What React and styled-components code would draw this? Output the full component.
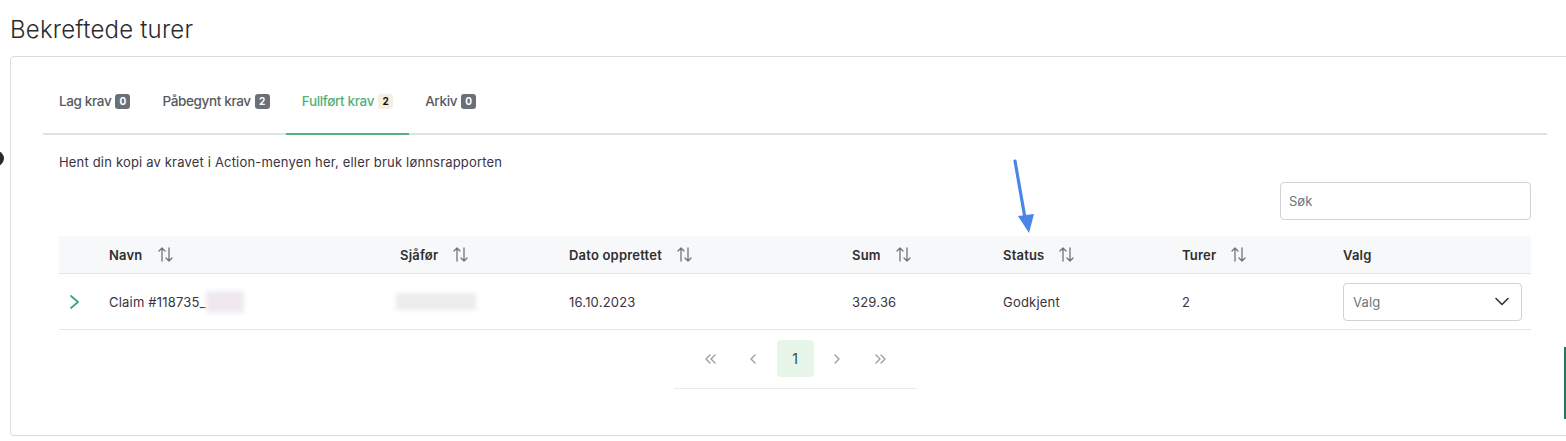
import React from 'react'
import styled, { createGlobalStyle } from 'styled-components'

const GlobalStyle = createGlobalStyle`
    html, body {
        margin: 0;
        padding: 0;
        background: #ffffff;
        overflow: hidden;
    }
    body {
        font-family: Inter, "Noto Sans", "Liberation Sans", sans-serif;
        color: #333333;
        width: 1566px;
        height: 441px;
    }
    * { box-sizing: border-box; }
`

const Page = styled.div`
    position: relative;
    padding: 14px 0 0 10px;
    height: 441px;
`

const Title = styled.h1`
    margin: 0 0 10px;
    font-size: 24px;
    line-height: 32px;
    font-weight: 300;
    color: #2b2b2b;
    letter-spacing: 0.2px;
`

const Card = styled.div`
    width: 1570px;
    height: 380px;
    border: 1px solid #dcdcdc;
    border-radius: 4px;
    padding: 24px 32px 0;
    background: #fff;
`

const TabBar = styled.div`
    display: flex;
    border-bottom: 2px solid #dee2e6;
`

const Tab = styled.div`
    display: flex;
    align-items: center;
    gap: 4px;
    padding: 10px 16px 22px;
    margin-bottom: -2px;
    font-size: 13.5px;
    line-height: 20px;
    font-weight: 500;
    letter-spacing: -0.35px;
    color: ${(props) => props.$active ? '#55b07a' : '#555a60'};
    border-bottom: 2px solid ${(props) => props.$active ? '#55b07a' : 'transparent'};
`

const Badge = styled.span`
    display: inline-flex;
    align-items: center;
    justify-content: center;
    min-width: 15px;
    height: 15px;
    padding: 0 3px;
    border-radius: 3px;
    font-size: 10px;
    font-weight: 700;
    letter-spacing: 0;
    background: ${(props) => props.$active ? '#f6efdf' : '#6b7078'};
    color: ${(props) => props.$active ? '#111' : '#fff'};
`

const Section = styled.div`
    padding: 17px 16px 0;
`

const Info = styled.p`
    margin: 0;
    font-size: 13px;
    line-height: 20px;
    color: #3a3340;
    letter-spacing: 0.18px;
`

const SearchRow = styled.div`
    display: flex;
    justify-content: flex-end;
    margin: 10px 0 16px;
`

const Search = styled.div`
    width: 251px;
    height: 38px;
    border: 1px solid #ced4da;
    border-radius: 4px;
    padding: 0 8px;
    display: flex;
    align-items: center;
    font-size: 13px;
    color: #6c757d;
`

const COLS = '50px 291px 169px 283px 151px 179px 161px 187px'

const HeadRow = styled.div`
    display: grid;
    grid-template-columns: ${COLS};
    height: 38px;
    background: #f7f8f9;
    border-bottom: 1px solid #e6e6e6;
    align-items: center;
`

const HeadCell = styled.div`
    display: flex;
    align-items: center;
    gap: 14px;
    font-size: 13px;
    font-weight: 600;
    color: #2f2f2f;
    letter-spacing: 0.2px;
`

const Row = styled.div`
    display: grid;
    grid-template-columns: ${COLS};
    height: 56px;
    border-bottom: 1px solid #e6e6e6;
    align-items: center;
`

const Cell = styled.div`
    display: flex;
    align-items: center;
    font-size: 13px;
    color: #3a3340;
    letter-spacing: 0.2px;
    padding-left: ${(props) => props.$pad || 0}px;
`

const Blur = styled.span`
    display: inline-block;
    width: ${(props) => props.$w}px;
    height: ${(props) => props.$h}px;
    margin-left: ${(props) => props.$shift || 0}px;
    background: ${(props) => props.$tint};
    filter: blur(2px);
`

const Select = styled.div`
    width: 179px;
    height: 38px;
    border: 1px solid #ced4da;
    border-radius: 4px;
    padding: 0 12px 0 9px;
    display: flex;
    align-items: center;
    justify-content: space-between;
    font-size: 13px;
    color: #6c757d;
`

const PagerWrap = styled.div`
    display: flex;
    justify-content: center;
    margin-top: 10px;
`

const Pager = styled.div`
    display: flex;
    gap: 5px;
    padding: 0 19px 11px;
    border-bottom: 1px solid #e9ecef;
`

const PageBtn = styled.div`
    width: 37px;
    height: 37px;
    border-radius: 4px;
    display: flex;
    align-items: center;
    justify-content: center;
    font-size: 14px;
    color: ${(props) => props.$active ? '#2f4f3a' : '#9aa0a6'};
    background: ${(props) => props.$active ? '#e8f5e9' : 'transparent'};
`

const Annotation = styled.svg`
    position: absolute;
    left: 1008px;
    top: 158px;
`

const EdgeDot = styled.div`
    position: absolute;
    left: -11px;
    top: 151px;
    width: 15px;
    height: 15px;
    border-radius: 50%;
    background: #2a2a2a;
`

const EdgeBar = styled.div`
    position: absolute;
    right: 0;
    top: 347px;
    width: 2px;
    height: 72px;
    background: #1f7a5c;
`

const SortIcon = () => (
    <svg width="17" height="17" viewBox="0 0 17 17" fill="none" stroke="#6c757d" strokeWidth="1.3" strokeLinecap="round" strokeLinejoin="round">
        <path d="M5 2v13M2 5l3-3 3 3" />
        <path d="M12 2v13M9 12l3 3 3-3" />
    </svg>
)

const PagerArrow = ({ dir, double }) => (
    <svg width={double ? 15 : 10} height="10" viewBox={`0 0 ${double ? 15 : 10} 10`} fill="none" stroke="#9aa0a6" strokeWidth="1.4" strokeLinecap="round" strokeLinejoin="round">
        {dir === 'left' && double && <><path d="M6 1L2 5l4 4" /><path d="M11 1L7 5l4 4" /></>}
        {dir === 'right' && double && <><path d="M4 1l4 4-4 4" /><path d="M9 1l4 4-4 4" /></>}
        {dir === 'left' && !double && <path d="M7 1L3 5l4 4" />}
        {dir === 'right' && !double && <path d="M3 1l4 4-4 4" />}
    </svg>
)

const headers = [
    { label: '', sort: false },
    { label: 'Navn', sort: true },
    { label: 'Sjåfør', sort: true },
    { label: 'Dato opprettet', sort: true },
    { label: 'Sum', sort: true },
    { label: 'Status', sort: true },
    { label: 'Turer', sort: true },
    { label: 'Valg', sort: false },
]

const tabs = [
    { label: 'Lag krav', count: 0 },
    { label: 'Påbegynt krav', count: 2 },
    { label: 'Fullført krav', count: 2, active: true },
    { label: 'Arkiv', count: 0 },
]

const App = () => {
    return (
        <Page>
            <GlobalStyle />
            <EdgeDot />
            <Title>Bekreftede turer</Title>
            <Card>
                <TabBar>
                    {tabs.map((t) => (
                        <Tab key={t.label} $active={t.active}>
                            {t.label}
                            <Badge $active={t.active}>{t.count}</Badge>
                        </Tab>
                    ))}
                </TabBar>
                <Section>
                    <Info>Hent din kopi av kravet i Action-menyen her, eller bruk lønnsrapporten</Info>
                    <SearchRow>
                        <Search>Søk</Search>
                    </SearchRow>

                    <HeadRow>
                        {headers.map((h, i) => (
                            <HeadCell key={i}>
                                {h.label}
                                {h.sort && <SortIcon />}
                            </HeadCell>
                        ))}
                    </HeadRow>

                    <Row>
                        <Cell $pad={10}>
                            <svg width="12" height="16" viewBox="0 0 12 16" fill="none" stroke="#3aa878" strokeWidth="1.8" strokeLinecap="round" strokeLinejoin="round">
                                <path d="M2 2l7 6-7 6" />
                            </svg>
                        </Cell>
                        <Cell>
                            Claim #118735_
                            <Blur $w={38} $h={22} $tint="#efe9ef" />
                        </Cell>
                        <Cell>
                            <Blur $w={80} $h={17} $tint="#ececec" $shift={-4} />
                        </Cell>
                        <Cell>16.10.2023</Cell>
                        <Cell>329.36</Cell>
                        <Cell>Godkjent</Cell>
                        <Cell>2</Cell>
                        <Cell>
                            <Select>
                                Valg
                                <svg width="14" height="9" viewBox="0 0 14 9" fill="none" stroke="#333" strokeWidth="1.6" strokeLinecap="round" strokeLinejoin="round">
                                    <path d="M1 1.5l6 6 6-6" />
                                </svg>
                            </Select>
                        </Cell>
                    </Row>

                    <PagerWrap>
                        <Pager>
                            <PageBtn><PagerArrow dir="left" double /></PageBtn>
                            <PageBtn><PagerArrow dir="left" /></PageBtn>
                            <PageBtn $active>1</PageBtn>
                            <PageBtn><PagerArrow dir="right" /></PageBtn>
                            <PageBtn><PagerArrow dir="right" double /></PageBtn>
                        </Pager>
                    </PagerWrap>
                </Section>
            </Card>

            <Annotation width="30" height="80" viewBox="0 0 30 80">
                <path d="M7 3 L17 60" stroke="#4a86e8" strokeWidth="3.2" strokeLinecap="round" />
                <path d="M10 58 L26 56 L21 75 Z" fill="#4a86e8" />
            </Annotation>
            <EdgeBar />
        </Page>
    )
}

export default App
